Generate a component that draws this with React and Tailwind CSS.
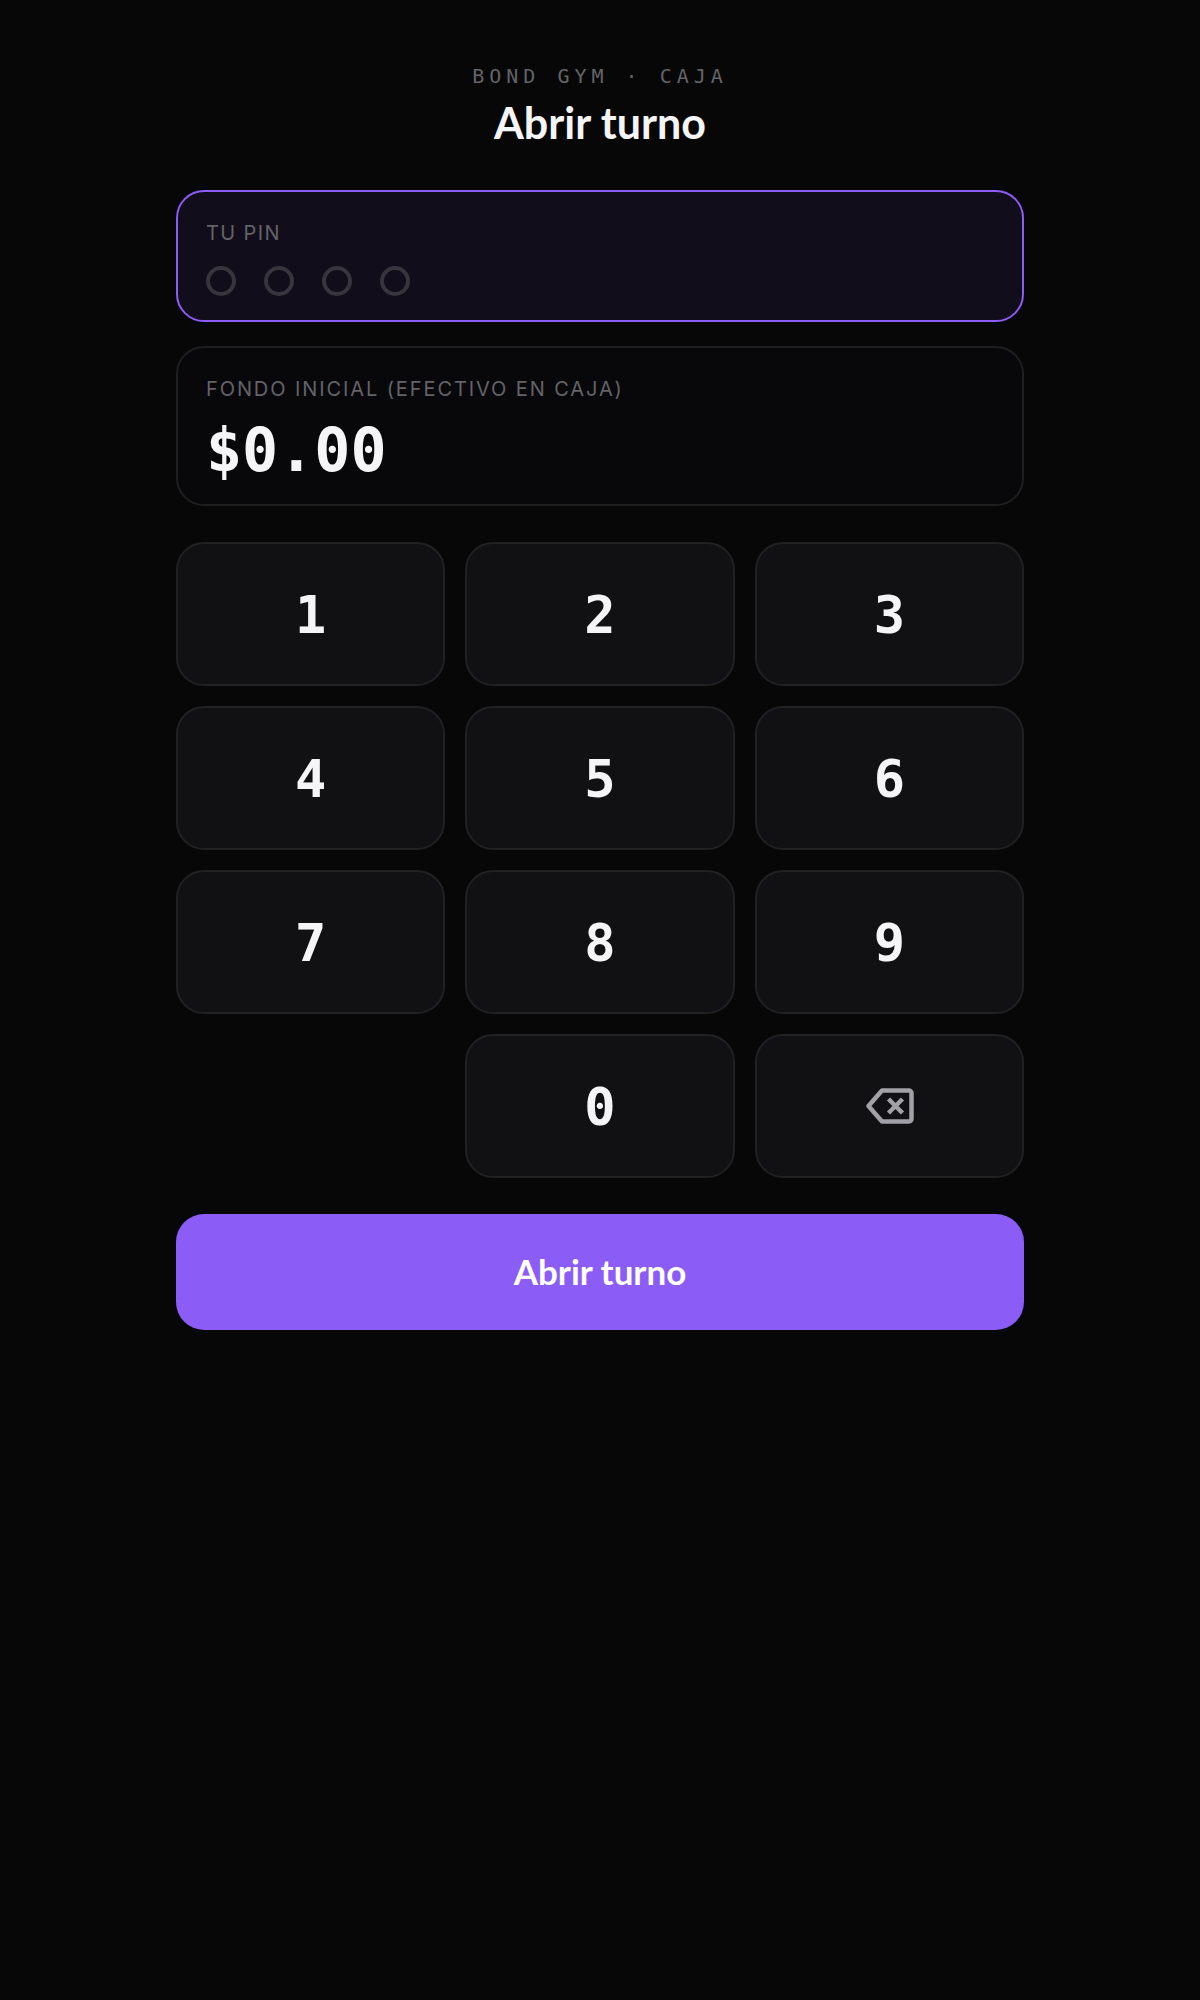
const KEYS = ["1", "2", "3", "4", "5", "6", "7", "8", "9"];

const keyClass =
  "h-[144px] rounded-[28px] border-2 border-[#212124] bg-[#111113] flex items-center justify-center text-[#f5f5f7] text-[52px] font-['DejaVu_Sans_Mono',monospace] font-bold";

const BackspaceIcon = () => (
  <svg className="ml-[2px]" width="48" height="36" viewBox="0 0 48 36" fill="none" stroke="#a1a1a6" strokeWidth="4.5" strokeLinejoin="round" strokeLinecap="round">
    <path d="M16 2.5h27a2.5 2.5 0 0 1 2.5 2.5v26a2.5 2.5 0 0 1-2.5 2.5H16L2.5 18z" />
    <path d="M22.5 11l14 14M36.5 11l-14 14" strokeWidth="4.5" strokeLinecap="butt" />
  </svg>
);

export default function App() {
  return (
    <div className="min-h-[2000px] bg-[#070708] flex flex-col items-center">
      <div className="w-[848px] pt-[64px] flex flex-col">
        <div className="text-center text-[20px] leading-[24px] tracking-[5px] text-[#636368] font-['DejaVu_Sans_Mono',monospace]">
          BOND GYM · CAJA
        </div>
        <h1 className="mt-[9px] text-center text-[43px] leading-[52px] font-bold text-[#f5f5f7] font-['Lato',sans-serif]">
          Abrir turno
        </h1>

        <div className="mt-[41px] h-[132px] rounded-[28px] border-2 border-[#8b5cf6] bg-[#110d1b] px-[28px] pt-[27px]">
          <div className="text-[20px] leading-[28px] tracking-[0.07em] text-[#636368] font-['Inter',sans-serif]">TU PIN</div>
          <div className="mt-[19px] flex gap-[28px]">
            {[0, 1, 2, 3].map((i) => (
              <div key={i} className="w-[30px] h-[30px] rounded-full border-[4px] border-[#36343c]" />
            ))}
          </div>
        </div>

        <div className="mt-[24px] h-[160px] rounded-[28px] border-2 border-[#1f1f22] bg-[#08080a] px-[28px] pt-[27px]">
          <div className="text-[20px] leading-[28px] tracking-[1.9px] text-[#636368] font-['Inter',sans-serif]">
            FONDO INICIAL (EFECTIVO EN CAJA)
          </div>
          <div className="mt-[12px] text-[60px] leading-[70px] font-bold text-[#f5f5f7] font-['DejaVu_Sans_Mono',monospace]">
            $0.00
          </div>
        </div>

        <div className="mt-[36px] grid grid-cols-3 gap-5">
          {KEYS.map((k) => (
            <button key={k} className={keyClass}><span className="pt-[2px]">{k}</span></button>
          ))}
          <div />
          <button className={keyClass}><span className="pt-[2px]">0</span></button>
          <button className={keyClass}><BackspaceIcon /></button>
        </div>

        <button className="mt-[36px] h-[116px] pb-[2px] rounded-[28px] bg-[#8b5cf6] text-white text-[35px] font-bold font-['Lato',sans-serif]">
          Abrir turno
        </button>
      </div>
    </div>
  );
}
